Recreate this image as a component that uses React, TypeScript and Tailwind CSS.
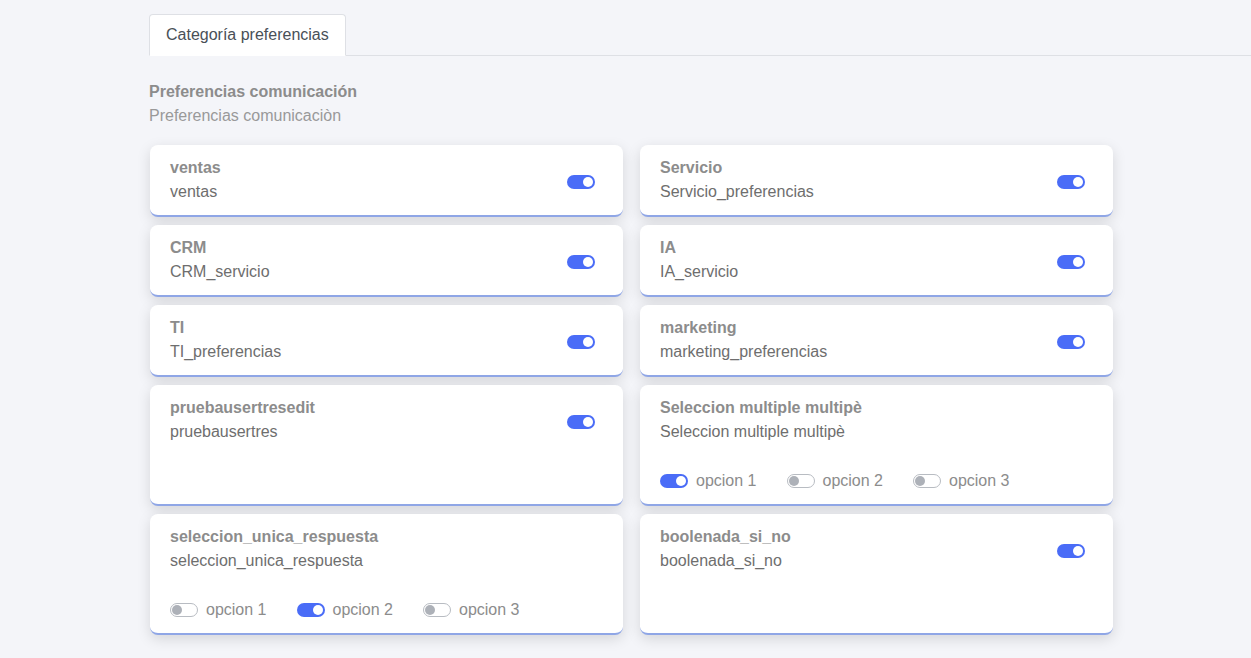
import React from 'react';

type Item = {
    title: string;
    subtitle: string;
    checked?: boolean;
    options?: { label: string; checked: boolean }[];
};

const items: Item[] = [
    { title: 'ventas', subtitle: 'ventas', checked: true },
    { title: 'Servicio', subtitle: 'Servicio_preferencias', checked: true },
    { title: 'CRM', subtitle: 'CRM_servicio', checked: true },
    { title: 'IA', subtitle: 'IA_servicio', checked: true },
    { title: 'TI', subtitle: 'TI_preferencias', checked: true },
    { title: 'marketing', subtitle: 'marketing_preferencias', checked: true },
    { title: 'pruebausertresedit', subtitle: 'pruebausertres', checked: true },
    {
        title: 'Seleccion multiple multipè',
        subtitle: 'Seleccion multiple multipè',
        options: [
            { label: 'opcion 1', checked: true },
            { label: 'opcion 2', checked: false },
            { label: 'opcion 3', checked: false },
        ],
    },
    {
        title: 'seleccion_unica_respuesta',
        subtitle: 'seleccion_unica_respuesta',
        options: [
            { label: 'opcion 1', checked: false },
            { label: 'opcion 2', checked: true },
            { label: 'opcion 3', checked: false },
        ],
    },
    { title: 'boolenada_si_no', subtitle: 'boolenada_si_no', checked: true },
];

function Switch({ on }: { on: boolean }) {
    return on ? (
        <span className="inline-flex items-center justify-end w-[28px] h-[14px] rounded-full bg-[#4a6cf7] pr-[2px] shrink-0">
            <span className="w-[10px] h-[10px] rounded-full bg-white" />
        </span>
    ) : (
        <span className="inline-flex items-center w-[28px] h-[14px] rounded-full bg-white border border-[#b8bcc2] pl-[1px] shrink-0">
            <span className="w-[10px] h-[10px] rounded-full bg-[#adb1b8]" />
        </span>
    );
}

function Card({ item }: { item: Item }) {
    return (
        <div className="bg-white rounded-lg border-b-2 border-[#8fa6e6] shadow-[0_4px_14px_rgba(0,0,0,0.13)] pt-[11px] pb-[11px] pl-[20px] pr-[28px] flex flex-col">
            <div className="flex items-start justify-between">
                <div className="leading-6 text-base">
                    <div className="font-bold text-[#8c8c8c]">{item.title}</div>
                    <div className="text-[#6e6e6e]">{item.subtitle}</div>
                </div>
                {item.checked !== undefined && (
                    <div className="mt-[14px]">
                        <Switch on={item.checked} />
                    </div>
                )}
            </div>
            {item.options && (
                <div className="flex items-center gap-[30px] mt-[25px] leading-6">
                    {item.options.map((o) => (
                        <div key={o.label} className="flex items-center gap-[8px] text-[#8c8c8c]">
                            <Switch on={o.checked} />
                            <span>{o.label}</span>
                        </div>
                    ))}
                </div>
            )}
        </div>
    );
}

export default function App() {
    return (
        <main
            className="min-h-screen bg-[#f4f5f9] pt-[14px] pl-[149px]"
            style={{ fontFamily: '"Liberation Sans", Arial, sans-serif' }}
        >
            <div className="flex border-b border-[#dee0e5]">
                <div className="-mb-px bg-white border border-[#dee0e5] border-b-white rounded-t px-[16px] h-[42px] flex items-center text-base text-[#495057]">
                    Categoría preferencias
                </div>
            </div>

            <div className="w-[964px] pt-[24px] pb-[24px]">
                <div className="leading-6 text-base">
                    <div className="font-bold text-[#8c8c8c]">Preferencias comunicación</div>
                    <div className="text-[#999999]">Preferencias comunicaciòn</div>
                </div>

                <div className="grid grid-cols-2 gap-x-[17px] gap-y-[8px] mt-[17px] pl-px">
                    {items.map((item) => (
                        <Card key={item.title + item.subtitle} item={item} />
                    ))}
                </div>
            </div>
        </main>
    );
}
